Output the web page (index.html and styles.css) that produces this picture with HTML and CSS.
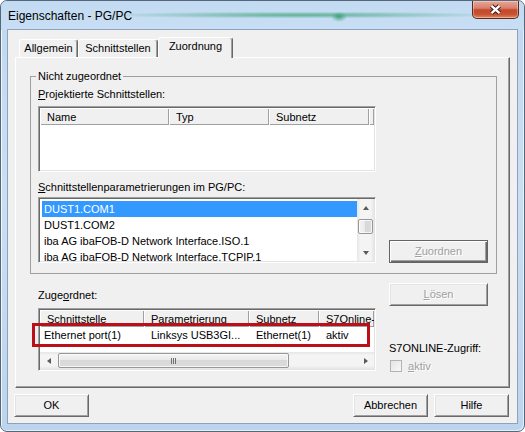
FILE: index.html
```html
<!DOCTYPE html>
<html lang="de">
<head>
<meta charset="utf-8">
<title>Eigenschaften - PG/PC</title>
<link rel="stylesheet" href="styles.css">
</head>
<body>
<div class="window">
  <div class="titlebar">
    <div class="title">Eigenschaften - PG/PC</div>
    <div class="close">
      <svg width="13" height="11" viewBox="0 0 13 11">
        <path d="M2.5 1.8 L10.5 9.2 M10.5 1.8 L2.5 9.2" stroke="#3a1a14" stroke-width="4.4" fill="none"/>
        <path d="M2.5 1.8 L10.5 9.2 M10.5 1.8 L2.5 9.2" stroke="#ffffff" stroke-width="2.4" fill="none"/>
      </svg>
    </div>
  </div>
  <div class="client">
    <div class="tabs">
      <div class="tab t1">Allgemein</div>
      <div class="tab t2">Schnittstellen</div>
      <div class="tab t3 sel">Zuordnung</div>
    </div>
    <div class="panel">
      <fieldset class="group">
        <legend>Nicht zugeordnet</legend>
        <div class="ggrid">
          <div class="gleft">
            <div class="label"><u>P</u>rojektierte Schnittstellen:</div>
            <div class="lv lv1">
              <div class="hdr">
                <div class="hc c11">Name</div>
                <div class="hc c12">Typ</div>
                <div class="hc c13">Subnetz</div>
                <div class="hc hfill"></div>
              </div>
            </div>
            <div class="label l2"><u>S</u>chnittstellenparametrierungen im PG/PC:</div>
            <div class="lv lv2">
              <div class="items">
                <div class="item sel">DUST1.COM1</div>
                <div class="item">DUST1.COM2</div>
                <div class="item">iba AG ibaFOB-D Network Interface.ISO.1</div>
                <div class="item">iba AG ibaFOB-D Network Interface.TCPIP.1</div>
              </div>
              <div class="vscroll">
                <div class="arrow"><span class="tri up"></span></div>
                <div class="vthumb"></div>
                <div class="grow"></div>
                <div class="arrow"><span class="tri down"></span></div>
              </div>
            </div>
          </div>
          <button class="btn wide dis def zuordnen" type="button"><u>Z</u>uordnen</button>
        </div>
      </fieldset>
      <div class="lower">
        <div class="lower-left">
          <div class="label l3">Zuge<u>o</u>rdnet:</div>
          <div class="lv3wrap">
            <div class="lv lv3">
              <div class="hdr">
                <div class="hc c31">Schnittstelle</div>
                <div class="hc c32">Parametrierung</div>
                <div class="hc c33">Subnetz</div>
                <div class="hc c34">S7Online-Zugriff</div>
              </div>
              <div class="row">
                <div class="cell c31 first">Ethernet port(1)</div>
                <div class="cell c32">Linksys USB3GI...</div>
                <div class="cell c33">Ethernet(1)</div>
                <div class="cell c34">aktiv</div>
              </div>
              <div class="grow"></div>
              <div class="hscroll">
                <div class="arrow"><span class="tri left"></span></div>
                <div class="hthumb"><span class="grip"></span></div>
                <div class="arrow right-arrow"><span class="tri right"></span></div>
              </div>
            </div>
            <div class="redbox"></div>
          </div>
        </div>
        <div class="lower-right">
          <button class="btn wide dis" type="button"><u>L</u>ösen</button>
          <div class="s7">S7ONLINE-Zugriff:</div>
          <div class="chk-row">
            <span class="cb"></span>
            <span class="aktiv"><u>a</u>ktiv</span>
          </div>
        </div>
      </div>
    </div>
    <div class="footer">
      <button class="btn" type="button">OK</button>
      <button class="btn abbr" type="button">Abbrechen</button>
      <button class="btn" type="button">Hilfe</button>
    </div>
  </div>
</div>
</body>
</html>
```
FILE: styles.css
```css
* { box-sizing: border-box; }
html, body { margin: 0; padding: 0; background: #ffffff; }
body {
  width: 525px;
  height: 432px;
  overflow: hidden;
  font-family: "Liberation Sans", Arial, sans-serif;
  font-size: 11px;
  color: #000;
}
u { text-decoration: underline; text-underline-offset: 1px; }

.window {
  width: 525px;
  height: 432px;
  border: 1px solid #56677a;
  border-radius: 7px;
  padding: 0 7px 8px 7px;
  background: linear-gradient(#c0d8f0, #c9dff4 45%, #bcd4ed);
  box-shadow: inset 1px 1px 0 rgba(255,255,255,.75), inset -1px -1px 0 rgba(255,255,255,.6);
  display: flex;
  flex-direction: column;
  overflow: hidden;
}

.titlebar {
  height: 29px;
  margin: 0 -7px;
  display: flex;
  justify-content: space-between;
  align-items: flex-start;
  border-radius: 6px 6px 0 0;
  background:
    radial-gradient(ellipse 8px 5px at 338px 16px, rgba(40,150,100,.75), rgba(40,150,100,0)),
    radial-gradient(ellipse 200px 3.5px at 300px 14px, rgba(70,165,125,.8), rgba(70,165,125,0)),
    linear-gradient(#c3dbf2, #c7def4);
}
.title {
  margin: 7px 0 0 7px;
  font-size: 12px;
  line-height: 16px;
  color: #000;
}
.close {
  width: 47px;
  height: 18px;
  margin-right: 5px;
  border: 1px solid #5e2a1f;
  border-top: none;
  border-radius: 0 0 5px 5px;
  background: linear-gradient(#e7a797, #d8806a 42%, #c24a2f 52%, #c9502f 78%, #e18a62);
  box-shadow: inset 0 0 0 1px rgba(255,255,255,.35);
  display: flex;
  align-items: center;
  justify-content: center;
}

.client {
  flex: 1;
  background: #f0f0f0;
  padding: 7px 7px 0 7px;
  box-shadow: 0 0 0 1px #8ea3bb;
  display: flex;
  flex-direction: column;
}

/* Tabs */
.tabs {
  height: 20px;
  display: flex;
  align-items: flex-end;
  padding-left: 4px;
}
.tab {
  height: 18px;
  background: #f0f0f0;
  border-top: 1px solid #fff;
  border-left: 1px solid #fff;
  border-right: 1px solid #696969;
  border-radius: 3px 3px 0 0;
  box-shadow: inset -1px 0 0 #a0a0a0;
  display: flex;
  align-items: center;
  justify-content: center;
  line-height: 13px;
}
.t1 { width: 59px; }
.t2 { width: 80px; }
.t3 { width: 75px; }
.tab.sel {
  height: 21px;
  margin-bottom: -1px;
  padding-bottom: 3px;
  position: relative;
  z-index: 1;
}

/* Panel */
.panel {
  height: 331px;
  border: 1px solid;
  border-color: #fff #696969 #696969 #fff;
  box-shadow: inset -1px -1px 0 #a0a0a0;
  padding: 12px 12px 0 14px;
}

.group {
  margin: 0;
  width: 467px;
  min-width: 0;
  padding: 5px 8px 10px 7px;
  border: 1px solid #a0a0a0;
}
.group legend {
  padding: 0 2px;
  margin-left: -2px;
  line-height: 13px;
}
.ggrid {
  display: grid;
  grid-template-columns: 338px 99px;
  column-gap: 13px;
}
.gleft { display: flex; flex-direction: column; }
.label { line-height: 13px; white-space: nowrap; }
.lv1 { margin-top: 5px; }
.l2 { margin-top: 9px; }
.lv2 { margin-top: 3px; }
.zuordnen { align-self: end; }

/* List views */
.lv {
  border: 1px solid;
  border-color: #a0a0a0 #fff #fff #a0a0a0;
  padding: 1px;
  background: #fff;
  box-shadow: inset 1px 1px 0 #696969, inset -1px -1px 0 #e3e3e3;
  overflow: hidden;
}
.lv1 { height: 66px; }
.hdr {
  display: flex;
  height: 17px;
  overflow: hidden;
  background: #f0f0f0;
}
.hc {
  flex: none;
  height: 17px;
  padding: 1px 0 0 7px;
  line-height: 16px;
  white-space: nowrap;
  overflow: hidden;
  box-shadow: inset 1px 1px 0 #fff, inset -1px -1px 0 #a0a0a0;
}
.c11 { width: 129px; }
.c12 { width: 100px; }
.c13 { width: 100px; }
.hfill { flex: 1; padding: 0; }

.lv2 {
  height: 66px;
  display: flex;
}
.items {
  flex: 1;
  padding: 2px 0 0 2px;
  overflow: hidden;
}
.item {
  height: 16px;
  line-height: 16px;
  padding-left: 2px;
  white-space: nowrap;
}
.item.sel { background: #3399ff; color: #fff; }

.vscroll {
  width: 17px;
  display: flex;
  flex-direction: column;
  background: linear-gradient(90deg, #e6e6e6, #f4f4f4 20%, #f4f4f4 80%, #e6e6e6);
}
.arrow {
  width: 17px;
  height: 17px;
  flex: none;
  display: flex;
  align-items: center;
  justify-content: center;
}
.grow { flex: 1; }
.vthumb {
  width: 15px;
  height: 15px;
  margin: 3px 0 0 1px;
  border: 1px solid #979797;
  border-radius: 2px;
  background: linear-gradient(90deg, #f4f4f4, #e9e9e9 50%, #d8d8d8 50%, #dcdcdc);
  box-shadow: inset 0 0 0 1px rgba(255,255,255,.75);
}
.tri { width: 0; height: 0; border: 3.5px solid transparent; }
.tri.up { border-bottom: 4px solid #5b5b5b; border-top-width: 0; }
.tri.down { border-top: 4px solid #5b5b5b; border-bottom-width: 0; }
.tri.left { border-right: 4px solid #5b5b5b; border-left-width: 0; }
.tri.right { border-left: 4px solid #5b5b5b; border-right-width: 0; }

/* Lower part */
.lower {
  display: grid;
  grid-template-columns: 338px 99px;
  column-gap: 13px;
  margin-left: 8px;
}
.lower-left { padding-top: 15px; }
.l3 { margin-bottom: 6px; }
.lv3wrap { position: relative; }
.lv3 {
  height: 63px;
  display: flex;
  flex-direction: column;
}
.c31 { width: 104px; }
.c32 { width: 105px; }
.c33 { width: 70px; }
.c34 { width: 55px; }
.row { display: flex; height: 17px; flex: none; }
.cell {
  flex: none;
  height: 17px;
  line-height: 17px;
  padding-left: 7px;
  white-space: nowrap;
  overflow: hidden;
}
.cell.first { padding-left: 4px; }
.hscroll {
  height: 17px;
  flex: none;
  display: flex;
  align-items: center;
  background: linear-gradient(#e6e6e6, #f4f4f4 20%, #f4f4f4 80%, #e6e6e6);
}
.hthumb {
  width: 231px;
  height: 15px;
  margin-left: 1px;
  border: 1px solid #979797;
  border-radius: 2px;
  background: linear-gradient(#f4f4f4, #e9e9e9 50%, #d8d8d8 50%, #dcdcdc);
  box-shadow: inset 0 0 0 1px rgba(255,255,255,.75);
  display: flex;
  align-items: center;
  justify-content: center;
}
.grip {
  width: 5px;
  height: 6px;
  background: repeating-linear-gradient(90deg, #6f6f6f 0 1px, transparent 1px 2px);
}
.right-arrow { margin-left: auto; }
.redbox {
  position: absolute;
  left: -6px;
  top: 15px;
  width: 338px;
  height: 24px;
  border: 3px solid #bb1018;
  pointer-events: none;
}

.lower-right {
  padding-top: 9px;
  display: flex;
  flex-direction: column;
}
.s7 { margin-top: 36px; line-height: 13px; white-space: nowrap; }
.chk-row {
  margin-top: 5px;
  height: 12px;
  display: flex;
  align-items: center;
}
.cb {
  width: 12px;
  height: 12px;
  margin-left: 1px;
  margin-right: 6px;
  border: 1px solid #b3b3b3;
  background: linear-gradient(135deg, #e4e4e4, #f8f8f8);
}
.aktiv { color: #a0a0a0; text-shadow: 1px 1px 0 #fff; line-height: 12px; }

/* Buttons */
.btn {
  width: 75px;
  height: 23px;
  padding: 0;
  margin: 0;
  font: inherit;
  color: #000;
  background: #f0f0f0;
  border: 1px solid;
  border-color: #fff #696969 #696969 #fff;
  box-shadow: inset 1px 1px 0 #e3e3e3, inset -1px -1px 0 #a0a0a0;
  display: flex;
  align-items: center;
  justify-content: center;
  line-height: 13px;
}
.btn.wide { width: 99px; }
.btn.dis { color: #a0a0a0; text-shadow: 1px 1px 0 #fff; }
.btn.def {
  border-color: #646464;
  box-shadow: inset 1px 1px 0 #fff, inset -1px -1px 0 #696969, inset -2px -2px 0 #a0a0a0;
}

.footer {
  display: flex;
  margin: 6px 1px 0 -1px;
  column-gap: 6px;
}
.abbr { margin-left: auto; }
```
